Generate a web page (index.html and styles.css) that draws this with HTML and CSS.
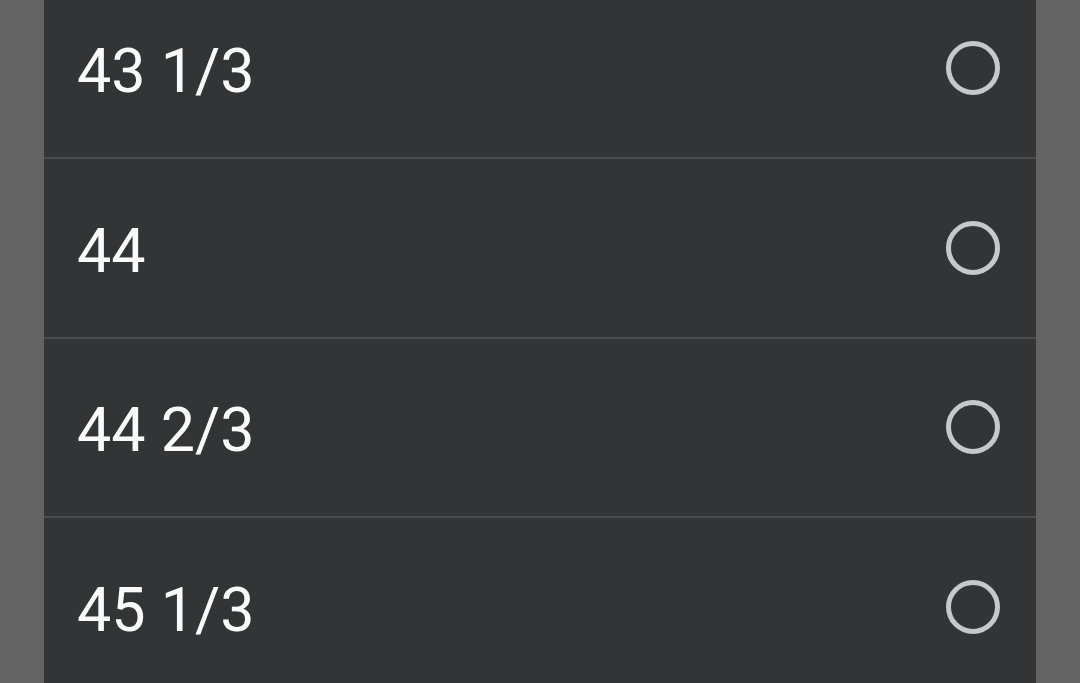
FILE: index.html
```html
<!DOCTYPE html>
<html>
<head>
<meta charset="utf-8">
<link rel="stylesheet" href="styles.css">
</head>
<body>
<div class="panel">
  <ul class="list">
    <li class="row"><span class="label">43 1/3</span><span class="radio"></span></li>
    <li class="row"><span class="label">44</span><span class="radio"></span></li>
    <li class="row"><span class="label">44 2/3</span><span class="radio"></span></li>
    <li class="row"><span class="label">45 1/3</span><span class="radio"></span></li>
  </ul>
</div>
</body>
</html>
```
FILE: styles.css
```css
html, body {
  margin: 0;
  padding: 0;
  height: 100%;
  overflow: hidden;
  background: #636363;
}
.panel {
  margin: 0 44px;
  height: 100%;
  background: #333436;
  overflow: hidden;
}
.list {
  list-style: none;
  margin: -20.5px 0 0 0;
  padding: 0;
}
.row {
  height: 177.5px;
  border-bottom: 2px solid #4b4c4e;
  display: flex;
  align-items: center;
  justify-content: space-between;
  padding: 0 36px 0 33px;
}
.label {
  font-family: Roboto, "Liberation Sans", sans-serif;
  font-size: 61px;
  color: #fafafa;
  line-height: 1;
  margin-top: 7px;
}
.radio {
  width: 44px;
  height: 44px;
  border: 5px solid #c6c8c9;
  border-radius: 50%;
}
```
